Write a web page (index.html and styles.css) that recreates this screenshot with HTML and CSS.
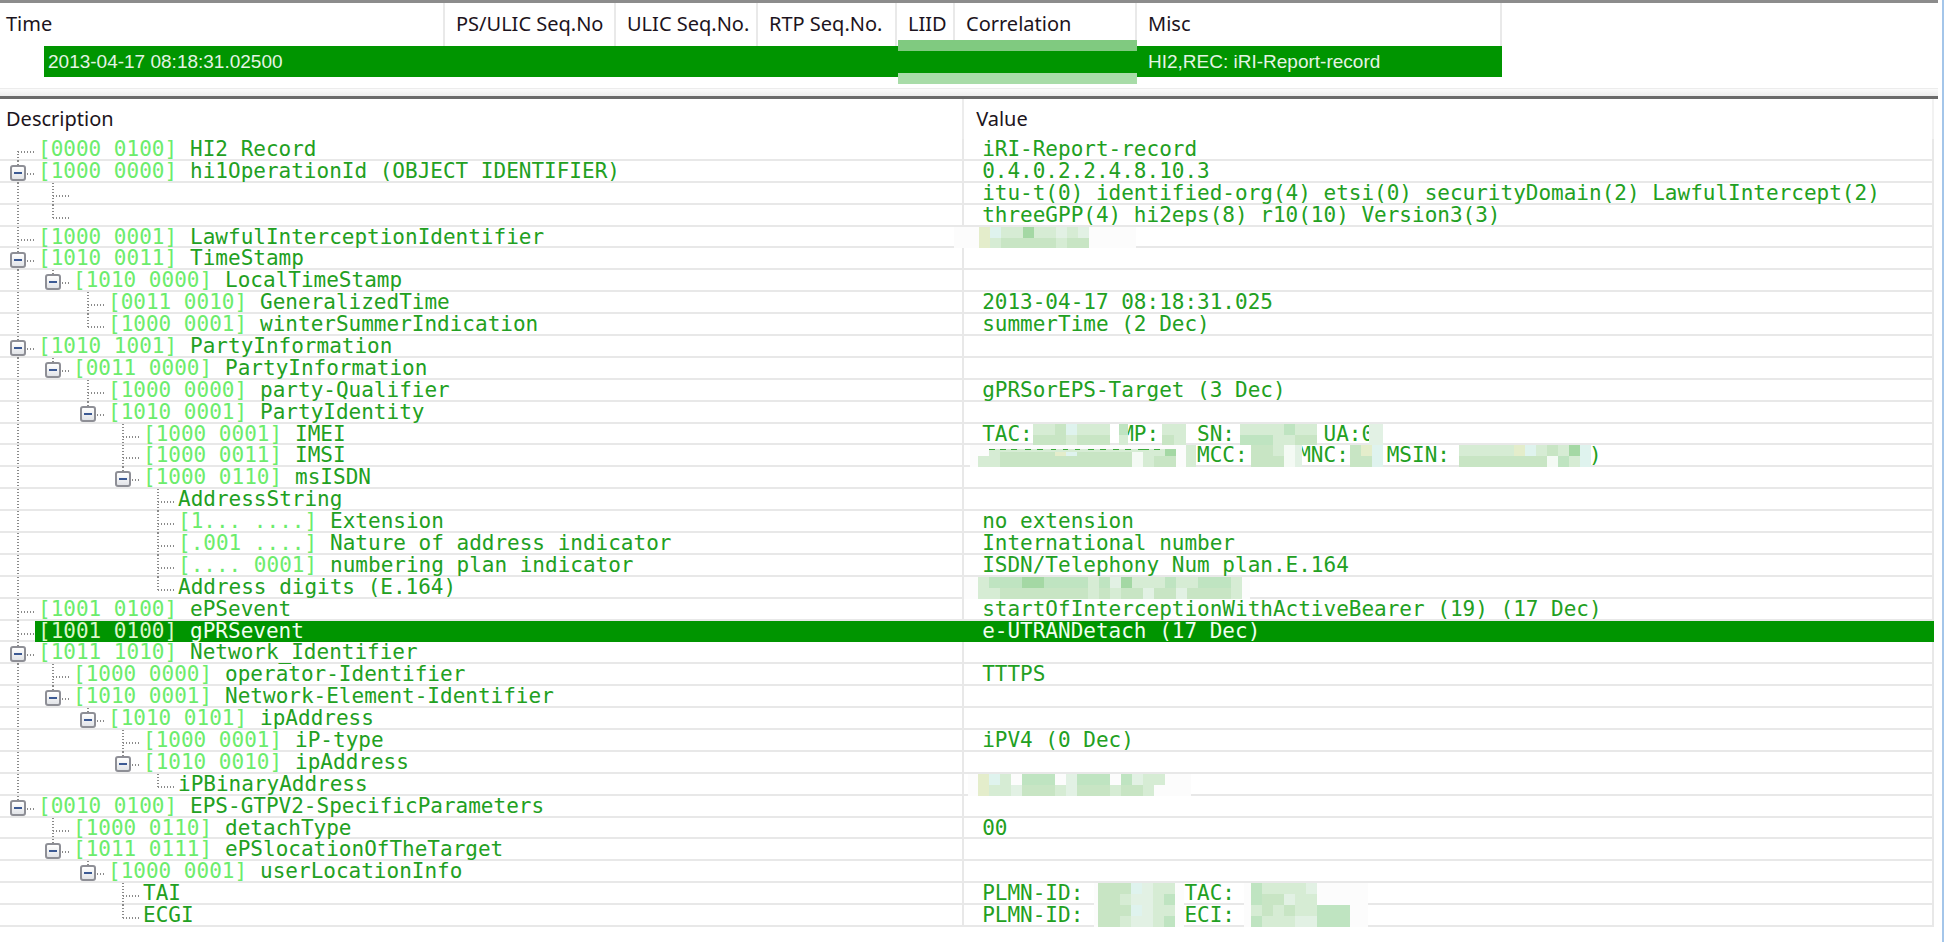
FILE: index.html
```html
<!DOCTYPE html>
<html lang="en">
<head>
<meta charset="utf-8">
<title>Interception record viewer</title>
<link rel="stylesheet" href="styles.css">
</head>
<body>
<main class="viewer">
<table class="packets">
<thead><tr><th>Time</th><th>PS/ULIC Seq.No</th><th>ULIC Seq.No.</th><th>RTP Seq.No.</th><th>LIID</th><th>Correlation</th><th>Misc</th></tr></thead>
<tbody><tr><td class="time"><span>2013-04-17 08:18:31.02500</span></td><td></td><td></td><td></td><td class="hidden-id" colspan="2"></td><td>HI2,REC: iRI-Report-record</td></tr></tbody>
</table>
<div class="splitter"></div>
<table class="details">
<thead><tr><th>Description</th><th>Value</th></tr></thead>
<tbody>
<tr><td class="l0"><span class="twig first"></span><span class="label"><b>[0000 0100]</b>HI2 Record</span></td><td>iRI-Report-record</td></tr>
<tr><td class="l0"><span class="twig tee"><button class="toggle" aria-label="Collapse"></button></span><span class="label"><b>[1000 0000]</b>hi1OperationId (OBJECT IDENTIFIER)</span></td><td>0.4.0.2.2.4.8.10.3</td></tr>
<tr><td class="l1 trunk"><span class="twig tee"></span></td><td>itu-t(0) identified-org(4) etsi(0) securityDomain(2) LawfulIntercept(2)</td></tr>
<tr><td class="l1 trunk"><span class="twig end"></span></td><td>threeGPP(4) hi2eps(8) r10(10) Version3(3)</td></tr>
<tr><td class="l0"><span class="twig tee"></span><span class="label"><b>[1000 0001]</b>LawfulInterceptionIdentifier</span></td><td><span class="mask" style="left:-8px;width:182px"></span><svg class="mosaic" style="left:17px;width:110px" viewBox="0 0 10 2" preserveAspectRatio="none"><path class="m2" d="M0 0h10v2h-10z"/><path class="m3" d="M2 1h5v1h-5z M8 1h2v1h-2z"/><path class="m1" d="M7 0h1v1h-1z M9 0h1v1h-1z"/><path class="my" d="M0 0h1v2h-1z"/><path class="mb" d="M1 0h1v1h-1z"/><path class="m5" d="M4 0h1v1h-1z"/></svg></td></tr>
<tr><td class="l0"><span class="twig tee"><button class="toggle" aria-label="Collapse"></button></span><span class="label"><b>[1010 0011]</b>TimeStamp</span></td><td></td></tr>
<tr><td class="l1 trunk"><span class="twig end"><button class="toggle" aria-label="Collapse"></button></span><span class="label"><b>[1010 0000]</b>LocalTimeStamp</span></td><td></td></tr>
<tr><td class="l2 trunk"><span class="twig tee"></span><span class="label"><b>[0011 0010]</b>GeneralizedTime</span></td><td>2013-04-17 08:18:31.025</td></tr>
<tr><td class="l2 trunk"><span class="twig end"></span><span class="label"><b>[1000 0001]</b>winterSummerIndication</span></td><td>summerTime (2 Dec)</td></tr>
<tr><td class="l0"><span class="twig tee"><button class="toggle" aria-label="Collapse"></button></span><span class="label"><b>[1010 1001]</b>PartyInformation</span></td><td></td></tr>
<tr><td class="l1 trunk"><span class="twig end"><button class="toggle" aria-label="Collapse"></button></span><span class="label"><b>[0011 0000]</b>PartyInformation</span></td><td></td></tr>
<tr><td class="l2 trunk"><span class="twig tee"></span><span class="label"><b>[1000 0000]</b>party-Qualifier</span></td><td>gPRSorEPS-Target (3 Dec)</td></tr>
<tr><td class="l2 trunk"><span class="twig end"><button class="toggle" aria-label="Collapse"></button></span><span class="label"><b>[1010 0001]</b>PartyIdentity</span></td><td></td></tr>
<tr><td class="l3 trunk"><span class="twig tee"></span><span class="label"><b>[1000 0001]</b>IMEI</span></td><td>TAC:       MP:   SN:       UA:0<svg class="mosaic" style="left:71px;width:77px" viewBox="0 0 7 2" preserveAspectRatio="none"><path class="m2" d="M0 0h7v2h-7z"/><path class="m3" d="M0 1h3v1h-3z M4 1h3v1h-3z M2 0h1v1h-1z"/><path class="mb" d="M3 0h1v1h-1z"/></svg><svg class="mosaic" style="left:157px;width:9px" viewBox="0 0 1 2" preserveAspectRatio="none"><path class="m2" d="M0 0h1v2h-1z"/><path class="m4" d="M0 0h1v1h-1z"/></svg><svg class="mosaic" style="left:200px;width:24px" viewBox="0 0 2 2" preserveAspectRatio="none"><path class="m2" d="M0 0h2v2h-2z"/><path class="m3" d="M0 1h1v1h-1z"/></svg><svg class="mosaic" style="left:278px;width:77px" viewBox="0 0 7 2" preserveAspectRatio="none"><path class="m2" d="M0 0h7v2h-7z"/><path class="m4" d="M0 1h3v1h-3z M4 0h1v1h-1z"/><path class="m3" d="M5 1h2v1h-2z"/></svg><svg class="mosaic" style="left:407px;width:14px" viewBox="0 0 1 2" preserveAspectRatio="none"><path class="m1" d="M0 0h1v2h-1z"/></svg></td></tr>
<tr><td class="l3 trunk"><span class="twig tee"></span><span class="label"><b>[1000 0011]</b>IMSI</span></td><td>                 MCC:    MNC:   MSIN:           )<span class="mask" style="left:8px;width:220px"></span><svg class="mosaic" style="left:16px;width:198px" viewBox="0 0 18 6" preserveAspectRatio="none"><path class="m2" d="M0 3h18v3h-18z M1 1h17v2h-17z"/><path class="m3" d="M2 2h12v4h-12z M16 3h2v3h-2z"/><path class="m0" d="M14 2h1v4h-1z"/><path class="my" d="M7 2h1v1h-1z"/><path class="mb" d="M8 2h1v1h-1z"/><path class="m5" d="M17 1h1v2h-1z"/><path class="mt" d="M1 1h.5v.5h-.5z M2 1h.5v.5h-.5z M3 1h.5v.5h-.5z M4.3 1h.5v.5h-.5z M5.4 1h.5v.5h-.5z M6.6 1h.5v.5h-.5z M7.7 1h.5v.5h-.5z M8.8 1h.5v.5h-.5z M10 1h.5v.5h-.5z M11.1 1h.5v.5h-.5z M12.3 1h.5v.5h-.5z M13.4 1h.5v.5h-.5z M14.5 1h1v.5h-1z M16 1h.5v.5h-.5z"/></svg><svg class="mosaic" style="left:224px;width:10px" viewBox="0 0 1 2" preserveAspectRatio="none"><path class="m2" d="M0 0h1v2h-1z"/></svg><svg class="mosaic" style="left:289px;width:44px" viewBox="0 0 4 2" preserveAspectRatio="none"><path class="m3" d="M0 0h3v2h-3z"/><path class="m2" d="M2 0h1v1h-1z"/><path class="m0" d="M3 0h1v2h-1z"/></svg><svg class="mosaic" style="left:333px;width:7px" viewBox="0 0 1 2" preserveAspectRatio="none"><path class="m1" d="M0 0h1v2h-1z"/></svg><svg class="mosaic" style="left:388px;width:33px" viewBox="0 0 3 2" preserveAspectRatio="none"><path class="m3" d="M0 0h2v2h-2z"/><path class="my" d="M1 0h1v1h-1z"/><path class="mb" d="M2 0h1v2h-1z"/></svg><svg class="mosaic" style="left:497px;width:132px" viewBox="0 0 12 2" preserveAspectRatio="none"><path class="m2" d="M0 0h11v2h-11z"/><path class="m3" d="M0 1h8v1h-8z M5 0h1v1h-1z M8 0h1v1h-1z"/><path class="my" d="M5 0h1v1h-1z"/><path class="mb" d="M6 0h1v1h-1z M11 0h1v2h-1z"/><path class="m0" d="M8 1h1v1h-1z"/><path class="m4" d="M9 1h1v1h-1z"/><path class="m5" d="M10 0h1v1h-1z"/></svg></td></tr>
<tr><td class="l3 trunk"><span class="twig end"><button class="toggle" aria-label="Collapse"></button></span><span class="label"><b>[1000 0110]</b>msISDN</span></td><td></td></tr>
<tr><td class="l4 trunk"><span class="twig tee"></span><span class="label">AddressString</span></td><td></td></tr>
<tr><td class="l4 trunk"><span class="twig tee"></span><span class="label"><b>[1... ....]</b>Extension</span></td><td>no extension</td></tr>
<tr><td class="l4 trunk"><span class="twig tee"></span><span class="label"><b>[.001 ....]</b>Nature of address indicator</span></td><td>International number</td></tr>
<tr><td class="l4 trunk"><span class="twig tee"></span><span class="label"><b>[.... 0001]</b>numbering plan indicator</span></td><td>ISDN/Telephony Num plan.E.164</td></tr>
<tr><td class="l4 trunk"><span class="twig end"></span><span class="label">Address digits (E.164)</span></td><td><span class="mask" style="left:2px;width:286px"></span><svg class="mosaic" style="left:16px;width:264px" viewBox="0 0 24 2" preserveAspectRatio="none"><path class="m2" d="M0 0h24v2h-24z"/><path class="m4" d="M1 0h3v1h-3z M6 0h4v1h-4z M11 0h1v1h-1z M17 0h1v1h-1z M20 0h3v1h-3z"/><path class="m3" d="M2 1h8v1h-8z M11 1h1v1h-1z M13 1h2v1h-2z M16 1h2v1h-2z M19 1h4v1h-4z"/><path class="m5" d="M4 0h2v1h-2z M13 0h1v1h-1z"/><path class="m1" d="M12 0h1v1h-1z M15 1h1v1h-1z M18 1h1v1h-1z"/></svg></td></tr>
<tr><td class="l0"><span class="twig tee"></span><span class="label"><b>[1001 0100]</b>ePSevent</span></td><td>startOfInterceptionWithActiveBearer (19) (17 Dec)</td></tr>
<tr class="selected"><td class="l0"><span class="twig tee"></span><span class="label"><b>[1001 0100]</b>gPRSevent</span></td><td>e-UTRANDetach (17 Dec)</td></tr>
<tr><td class="l0"><span class="twig tee"><button class="toggle" aria-label="Collapse"></button></span><span class="label"><b>[1011 1010]</b>Network_Identifier</span></td><td></td></tr>
<tr><td class="l1 trunk"><span class="twig tee"></span><span class="label"><b>[1000 0000]</b>operator-Identifier</span></td><td>TTTPS</td></tr>
<tr><td class="l1 trunk"><span class="twig end"><button class="toggle" aria-label="Collapse"></button></span><span class="label"><b>[1010 0001]</b>Network-Element-Identifier</span></td><td></td></tr>
<tr><td class="l2 trunk"><span class="twig end"><button class="toggle" aria-label="Collapse"></button></span><span class="label"><b>[1010 0101]</b>ipAddress</span></td><td></td></tr>
<tr><td class="l3 trunk"><span class="twig tee"></span><span class="label"><b>[1000 0001]</b>iP-type</span></td><td>iPV4 (0 Dec)</td></tr>
<tr><td class="l3 trunk"><span class="twig end"><button class="toggle" aria-label="Collapse"></button></span><span class="label"><b>[1010 0010]</b>ipAddress</span></td><td></td></tr>
<tr><td class="l4 trunk"><span class="twig end"></span><span class="label">iPBinaryAddress</span></td><td><span class="mask" style="left:6px;width:223px"></span><svg class="mosaic" style="left:16px;width:187px" viewBox="0 0 17 2" preserveAspectRatio="none"><path class="m2" d="M0 0h3v2h-3z M3 1h13v1h-13z M15 0h2v1h-2z"/><path class="my" d="M0 0h1v2h-1z"/><path class="mb" d="M1 0h1v1h-1z"/><path class="m1" d="M3 1h1v1h-1z M8 0h1v2h-1z M14 0h1v1h-1z"/><path class="m4" d="M4 0h3v1h-3z M9 0h3v1h-3z M13 0h1v1h-1z"/><path class="m3" d="M4 1h3v1h-3z M9 1h3v1h-3z M13 1h2v1h-2z"/></svg></td></tr>
<tr><td class="l0"><span class="twig end"><button class="toggle" aria-label="Collapse"></button></span><span class="label"><b>[0010 0100]</b>EPS-GTPV2-SpecificParameters</span></td><td></td></tr>
<tr><td class="l1"><span class="twig tee"></span><span class="label"><b>[1000 0110]</b>detachType</span></td><td>00</td></tr>
<tr><td class="l1"><span class="twig end"><button class="toggle" aria-label="Collapse"></button></span><span class="label"><b>[1011 0111]</b>ePSlocationOfTheTarget</span></td><td></td></tr>
<tr><td class="l2"><span class="twig end"><button class="toggle" aria-label="Collapse"></button></span><span class="label"><b>[1000 0001]</b>userLocationInfo</span></td><td></td></tr>
<tr><td class="l3"><span class="twig tee"></span><span class="label">TAI</span></td><td>PLMN-ID:        TAC:<span class="mask" style="left:132px;width:90px"></span><svg class="mosaic" style="left:136px;width:77px" viewBox="0 0 7 2" preserveAspectRatio="none"><path class="m3" d="M0 0h3v2h-3z"/><path class="m2" d="M2 1h1v1h-1z M5 0h2v2h-2z"/><path class="mb" d="M3 0h1v1h-1z"/><path class="m1" d="M3 1h1v1h-1z M4 0h1v2h-1z"/><path class="m4" d="M6 1h1v1h-1z"/></svg><span class="mask" style="left:282px;width:124px"></span><svg class="mosaic" style="left:289px;width:66px" viewBox="0 0 6 2" preserveAspectRatio="none"><path class="m2" d="M0 0h6v2h-6z"/><path class="m4" d="M0 0h1v2h-1z"/><path class="m3" d="M1 1h2v1h-2z"/><path class="m1" d="M5 0h1v1h-1z M3 1h1v1h-1z"/></svg></td></tr>
<tr><td class="l3"><span class="twig end"></span><span class="label">ECGI</span></td><td>PLMN-ID:        ECI:<span class="mask" style="left:132px;width:90px"></span><svg class="mosaic" style="left:136px;width:77px" viewBox="0 0 7 2" preserveAspectRatio="none"><path class="m3" d="M0 0h3v2h-3z"/><path class="m2" d="M2 1h1v1h-1z M5 0h2v2h-2z"/><path class="mb" d="M3 0h1v1h-1z"/><path class="m1" d="M3 1h1v1h-1z M4 0h1v2h-1z"/><path class="m4" d="M6 1h1v1h-1z"/></svg><span class="mask" style="left:282px;width:124px"></span><svg class="mosaic" style="left:289px;width:99px" viewBox="0 0 9 2" preserveAspectRatio="none"><path class="m2" d="M0 0h6v2h-6z"/><path class="m4" d="M0 1h1v1h-1z M6 0h3v2h-3z"/><path class="m3" d="M1 0h1v1h-1z M3 0h1v1h-1z"/><path class="m1" d="M4 1h2v1h-2z"/></svg></td></tr>
</tbody>
</table>
</main>
</body>
</html>
```

FILE: styles.css
```css
* { box-sizing: border-box; }

body {
  margin: 0;
  background: #fff;
  color: #1c1420;
  font-family: "Noto Sans", "Open Sans", sans-serif;
  font-size: 20px;
}

.viewer {
  display: flex;
  flex-direction: column;
  min-height: 100vh;
  padding: 0 4px 15px 0;
  border-right: 2px solid #a4c6ea;
}

table, thead, tbody { display: block; }
tr { display: grid; }

th, td {
  padding: 0;
  font-weight: 400;
  text-align: left;
  white-space: pre;
}

/* Packet list */
.packets {
  padding-bottom: 11px;
  border-top: 3px solid #8c8c8c;
}

.packets tr { grid-template-columns: 445fr 171fr 142fr 139fr 58fr 182fr 365fr 436fr; }

.packets th {
  height: 43px;
  padding-left: 11px;
  border-right: 2px solid #e9e9e9;
  line-height: 42px;
}

.packets th:first-child { padding-left: 6px; }

.packets td {
  height: 31px;
  padding-left: 11px;
  background: #009500;
  color: #e4f4e4;
  font-family: "Liberation Sans", Arial, sans-serif;
  font-size: 19px;
  line-height: 32px;
}

.packets .time {
  padding-left: 44px;
  background: none;
}

.time span {
  display: block;
  height: 31px;
  padding-left: 4px;
  background: #009500;
}

.hidden-id {
  position: relative;
  grid-column: span 2;
}

.hidden-id::before,
.hidden-id::after {
  content: "";
  position: absolute;
  left: 1px;
  right: 0;
  height: 11px;
}

.hidden-id::before { top: -6px; background: #80ca80; }
.hidden-id::after { bottom: -7px; background: #a8dca8; }

.splitter {
  height: 11px;
  border-top: 1px solid #ececec;
  border-bottom: 3px solid #6a6a6a;
  background: linear-gradient(#fbfbfb, #ececec);
}

/* Decoded record tree */
.details {
  display: flex;
  flex: 1;
  flex-direction: column;
  margin-right: 4px;
}

.details tr {
  grid-template-columns: 99fr 100fr;
}

.details th {
  height: 40px;
  padding-left: 6px;
  line-height: 40px;
}

.details th + th {
  padding-left: 12px;
  border-left: 2px solid #ececec;
  border-right: 2px solid #f2f2f2;
}

.details tbody {
  display: grid;
  flex: 1;
  grid-auto-rows: 1fr;
}

.details td {
  position: relative;
  display: flex;
  min-height: 21px;
  box-shadow: inset 0 -2px #e8e8e8;
  color: #22a022;
  font-family: "DejaVu Sans Mono", "Liberation Mono", monospace;
  font-size: 21px;
  line-height: 21px;
}

.details td + td {
  padding-left: 18px;
  border-left: 2px solid #e8e8e8;
  border-right: 2px solid #e8e8e8;
}

.details .l1 { padding-left: 35px; }
.details .l2 { padding-left: 70px; }
.details .l3 { padding-left: 105px; }
.details .l4 { padding-left: 140px; }

.label {
  flex: 1;
  padding-left: 3px;
}

.label b {
  margin-right: 13px;
  color: #6cec6c;
  font-weight: 400;
}

/* Dotted guides */
.trunk {
  background: repeating-linear-gradient(#8a8a8a 0 1px, transparent 1px 3px) 17px 0 / 2px 100% no-repeat;
}

.twig {
  position: relative;
  flex: none;
  width: 35px;
  padding: 4px 0 0 10px;
}

.twig::before,
.twig::after {
  content: "";
  position: absolute;
}

.twig::before {
  top: 0;
  bottom: 0;
  left: 17px;
  width: 2px;
  background: repeating-linear-gradient(#8a8a8a 0 1px, transparent 1px 3px);
}

.twig::after {
  top: 12px;
  left: 18px;
  width: 16px;
  height: 2px;
  background: repeating-linear-gradient(90deg, #8a8a8a 0 1px, transparent 1px 3px);
}

.first::before { top: 12px; }
.end::before { bottom: 9px; }

.toggle {
  position: relative;
  z-index: 1;
  display: block;
  width: 16px;
  height: 16px;
  padding: 0;
  border: 2px solid #8e8f96;
  border-radius: 3px;
  background: linear-gradient(#3c5a94, #3c5a94) center / 8px 2px no-repeat, linear-gradient(#fff, #e2e4e8);
}

/* Selected row */
.selected .label { background: #009500; }

.selected .label b { color: #d8f8c8; }

.details .selected td { color: #f0fff0; }

.details .selected td + td {
  border-color: #009500;
  background: #009500;
  box-shadow: none;
}

/* Pixelated values */
.mask, .mosaic {
  position: absolute;
  top: 0;
  height: 100%;
  margin-left: -2px;
}

.mask { background: #fcfcfc; }
.mosaic { shape-rendering: crispEdges; }

.m0 { fill: #f4faf4; }
.m1 { fill: #e2f1e4; }
.m2 { fill: #d6ecd4; }
.m3 { fill: #c8e5c4; }
.m4 { fill: #bfe4c1; }
.m5 { fill: #a4d8a4; }
.my { fill: #e4edcb; }
.mb { fill: #dff3ee; }
.mt { fill: #3aa83a; }
```
